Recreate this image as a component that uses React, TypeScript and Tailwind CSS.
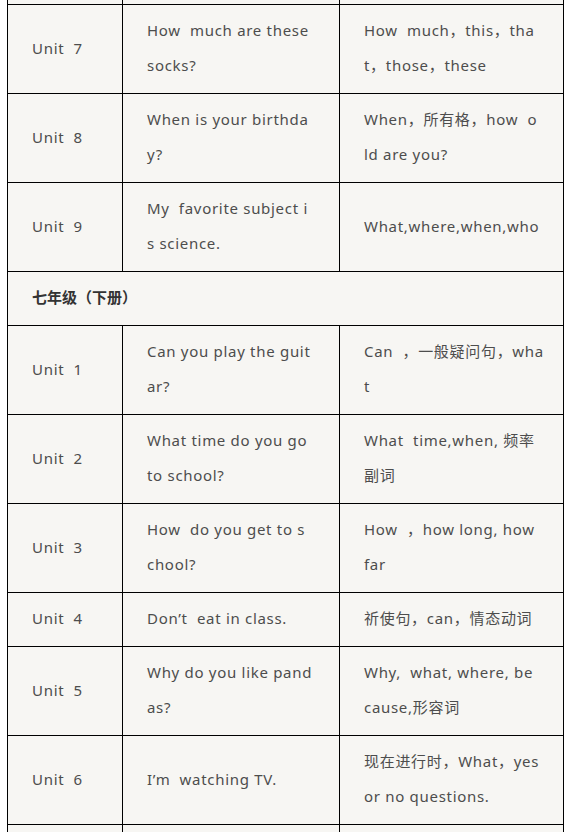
import React from 'react';

type Row = { unit: string; sentence: string[]; focus: string[] };

const rowsTop: Row[] = [
    { unit: 'Unit  7', sentence: ['How  much are these', 'socks?'], focus: ['How  much，this，tha', 't，those，these'] },
    { unit: 'Unit  8', sentence: ['When is your birthda', 'y?'], focus: ['When，所有格，how  o', 'ld are you?'] },
    { unit: 'Unit  9', sentence: ['My  favorite subject i', 's science.'], focus: ['What,where,when,who'] },
];

const rowsBottom: Row[] = [
    { unit: 'Unit  1', sentence: ['Can you play the guit', 'ar?'], focus: ['Can  ，一般疑问句，wha', 't'] },
    { unit: 'Unit  2', sentence: ['What time do you go', 'to school?'], focus: ['What  time,when, 频率', '副词'] },
    { unit: 'Unit  3', sentence: ['How  do you get to s', 'chool?'], focus: ['How  ，how long, how', 'far'] },
    { unit: 'Unit  4', sentence: ['Don’t  eat in class.'], focus: ['祈使句，can，情态动词'] },
    { unit: 'Unit  5', sentence: ['Why do you like pand', 'as?'], focus: ['Why,  what, where, be', 'cause,形容词'] },
    { unit: 'Unit  6', sentence: ['I’m  watching TV.'], focus: ['现在进行时，What，yes', 'or no questions.'] },
];

const cell = 'border border-black px-6 pt-[8px] pb-[10px] align-middle';

function Lines({ lines }: { lines: string[] }) {
    return (
        <>
            {lines.map((l, i) => (
                <div key={i} className="whitespace-pre">
                    {l}
                </div>
            ))}
        </>
    );
}

function UnitRow({ row }: { row: Row }) {
    return (
        <tr>
            <td className={cell}>
                <div className="whitespace-pre">{row.unit}</div>
            </td>
            <td className={cell}>
                <Lines lines={row.sentence} />
            </td>
            <td className={cell}>
                <Lines lines={row.focus} />
            </td>
        </tr>
    );
}

export default function App() {
    return (
        <div className="h-[832px] w-[572px] overflow-hidden bg-white">
            <table
                className="ml-[7px] mt-[-85px] w-[556px] table-fixed border-collapse bg-[#f7f6f3] text-[15px] leading-[35px] tracking-[0.7px] text-[#4d4d4d]"
                style={{ fontFamily: '"Noto Sans", "Noto Sans CJK SC", sans-serif' }}
            >
                <colgroup>
                    <col className="w-[115px]" />
                    <col className="w-[217px]" />
                    <col className="w-[224px]" />
                </colgroup>
                <tbody>
                    {/* row cut off above */}
                    <tr className="h-[89px]">
                        <td className={cell} />
                        <td className={cell} />
                        <td className={cell} />
                    </tr>
                    {rowsTop.map((r) => (
                        <UnitRow key={r.unit} row={r} />
                    ))}
                    <tr>
                        <td colSpan={3} className={`${cell} font-bold tracking-normal text-[#333]`}>
                            七年级（下册）
                        </td>
                    </tr>
                    {rowsBottom.map((r) => (
                        <UnitRow key={r.unit} row={r} />
                    ))}
                    {/* next row, cut off below */}
                    <tr className="h-[89px]">
                        <td className={cell} />
                        <td className={cell} />
                        <td className={cell} />
                    </tr>
                </tbody>
            </table>
        </div>
    );
}
